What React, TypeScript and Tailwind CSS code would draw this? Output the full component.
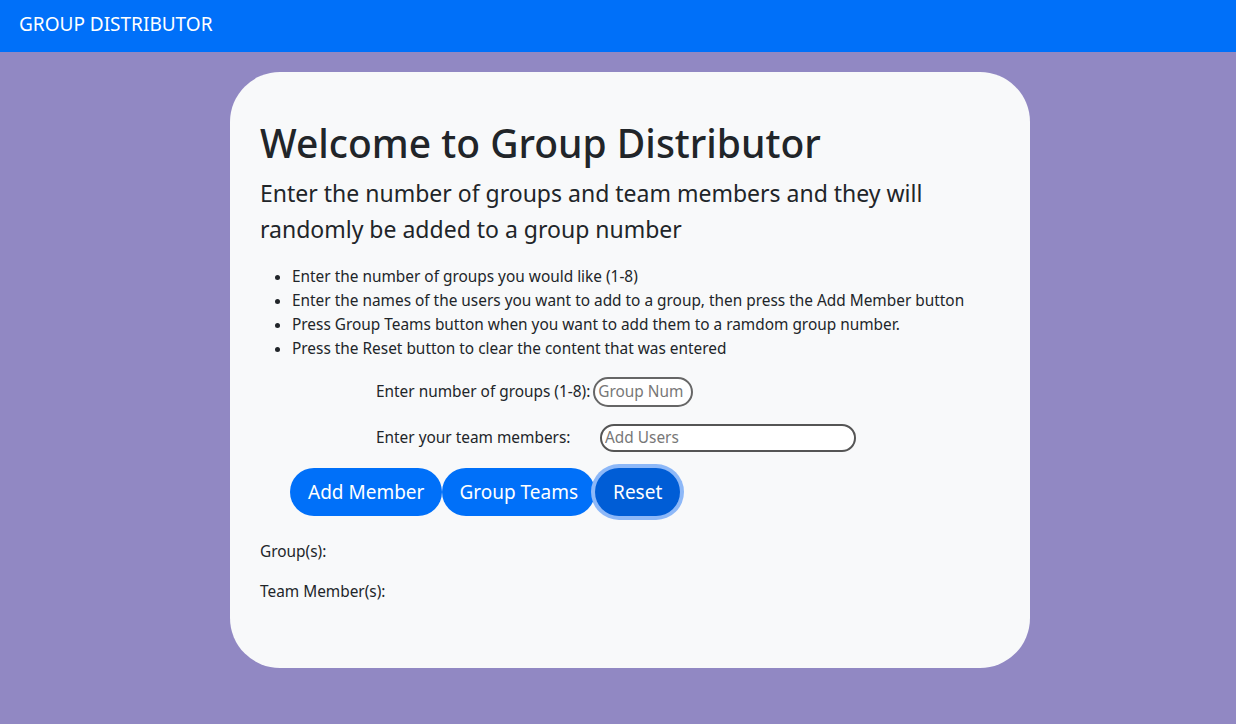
import React from 'react';

const font = { fontFamily: '"Noto Sans", "Open Sans", sans-serif' };

export default function App() {
  return (
    <div style={font} className="min-h-screen w-full bg-[#9188c3] text-[#212529]">
      {/* Top bar */}
      <nav className="h-[52px] w-full bg-[#0070f9] flex items-center px-[19px] pb-[4px]">
        <span className="text-white text-[19px] leading-none">GROUP DISTRIBUTOR</span>
      </nav>

      {/* Card */}
      <div className="ml-[230px] mt-[20px] w-[800px] h-[596px] rounded-[50px] bg-[#f8f9fa] px-[30px] pt-[48px]">
        <h1 className="text-[39px] font-medium leading-[1.2] mb-[8px]">Welcome to Group Distributor</h1>
        <p className="text-[23px] leading-[36px] mb-[18px] max-w-[700px]">
          Enter the number of groups and team members and they will randomly be added to a group number
        </p>

        <ul className="list-disc pl-[32px] text-[15.4px] leading-[24px] mb-[16px]">
          <li>Enter the number of groups you would like (1-8)</li>
          <li>Enter the names of the users you want to add to a group, then press the Add Member button</li>
          <li>Press Group Teams button when you want to add them to a ramdom group number.</li>
          <li>Press the Reset button to clear the content that was entered</li>
        </ul>

        <div className="pl-[116px] text-[15.4px] flex flex-col gap-[16px]">
          <div className="flex items-center h-[30px]">
            <label className="mr-[3px]">Enter number of groups (1-8):</label>
            <input
              placeholder="Group Num"
              className="w-[100px] h-[30px] rounded-full border-2 border-[#666] bg-white px-[3px] text-[15.4px] placeholder:text-[#777] outline-none"
            />
          </div>
          <div className="flex items-center h-[30px]">
            <label className="w-[224px]">Enter your team members:</label>
            <input
              placeholder="Add Users"
              className="w-[256px] h-[28px] rounded-full border-2 border-[#555] bg-white px-[3px] text-[15.4px] placeholder:text-[#777] outline-none"
            />
          </div>
        </div>

        <div className="flex pl-[30px] mt-[15px]">
          <button className="h-[48px] px-[18px] rounded-full bg-[#0070f9] text-white text-[19px]">Add Member</button>
          <button className="h-[48px] px-[17px] rounded-full bg-[#0070f9] text-white text-[19px]">Group Teams</button>
          <button className="h-[48px] px-[18px] rounded-full bg-[#005dd6] text-white text-[19px] ring-4 ring-[#8db8f8]">Reset</button>
        </div>

        <p className="mt-[24px] text-[15.4px] leading-[24px]">Group(s):</p>
        <p className="mt-[16px] text-[15.4px] leading-[24px]">Team Member(s):</p>
      </div>
      <div className="h-[56px]" />
    </div>
  );
}
